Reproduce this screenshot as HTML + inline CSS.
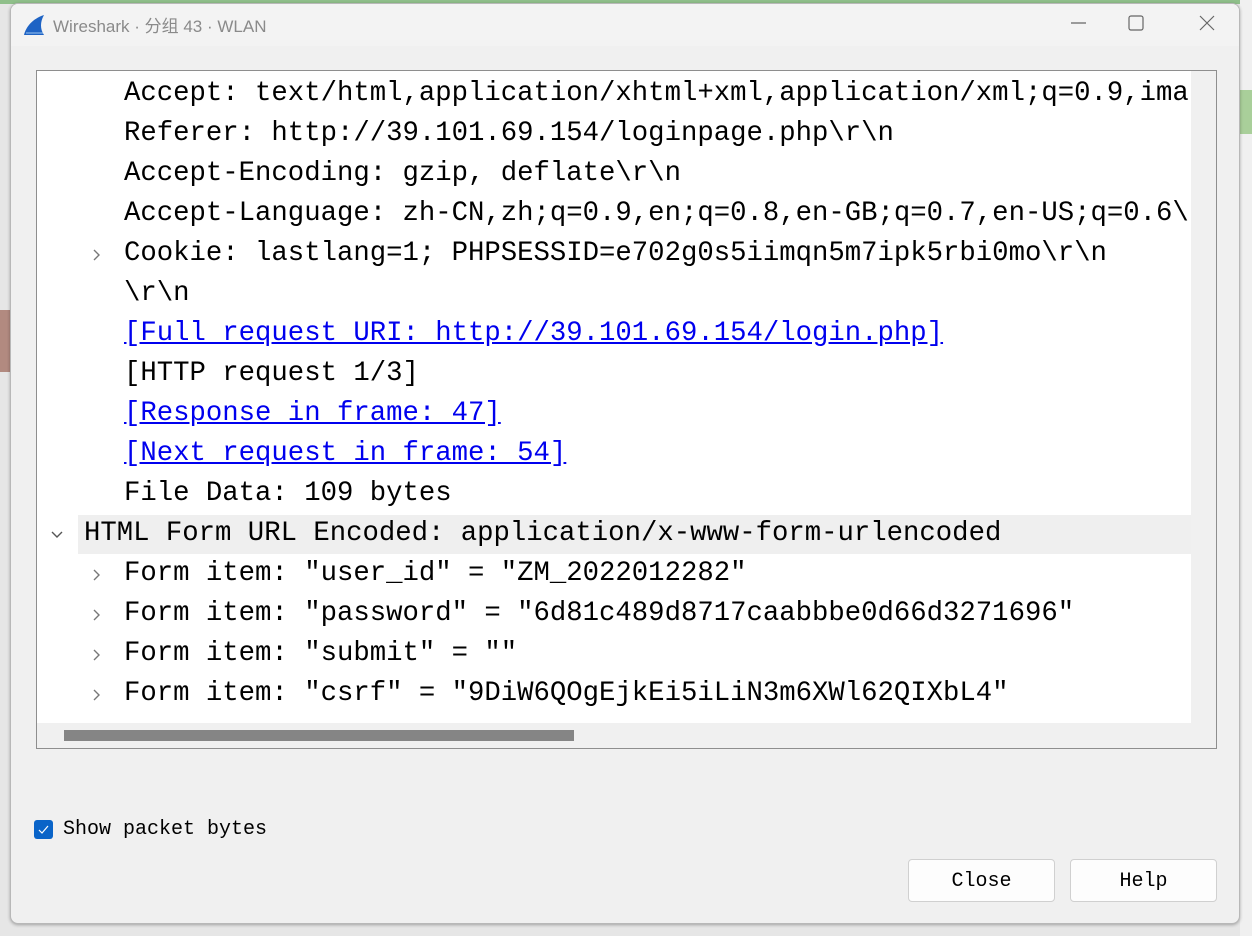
<!DOCTYPE html>
<html><head><meta charset="utf-8"><style>
html,body{margin:0;padding:0;width:1252px;height:936px;overflow:hidden;background:#e6e6e6;position:relative;font-family:"Liberation Sans","Noto Sans CJK SC",sans-serif}
.topstrip{position:absolute;left:0;top:0;width:1252px;height:4px;background:#8fbf8a}
.rightstrip{position:absolute;left:1240px;top:0;width:12px;height:936px;background:#f0f0f0}
.rg{position:absolute;left:1240px;top:90px;width:12px;height:44px;background:#a9cf9a}
.leftblock{position:absolute;left:0;top:310px;width:10px;height:62px;background:#b28a80}
.win{position:absolute;left:10px;top:3px;width:1230px;height:921px;background:#f0f0f0;border:1px solid #b8b8b8;border-radius:8px;box-sizing:border-box;overflow:hidden;box-shadow:0 1px 3px rgba(0,0,0,.3)}
.title{position:absolute;left:0;top:0;width:100%;height:42px;background:#f3f3f3}
.title span{position:absolute;left:42px;top:8px;font-size:17px;color:#8a8a8a}
.tree{position:absolute;left:25px;top:66px;width:1181px;height:679px;background:#fff;border:1px solid #8e8e8e;box-sizing:border-box;overflow:hidden}
.row{position:absolute;left:0;height:40px;line-height:40px;font-family:"Liberation Mono",monospace;font-size:27.3px;color:#000;white-space:nowrap}
.row a{color:#0000ee;text-decoration:underline}
.arr{position:absolute;width:12px;height:14px}
.vs{position:absolute;left:1154px;top:0;width:26px;height:652px;background:#f0f0f0}
.vt{position:absolute;left:1161px;top:307px;width:11px;height:318px;background:#858585}
.hs{position:absolute;left:0;top:652px;width:1180px;height:26px;background:#f0f0f0}
.ht{position:absolute;left:27px;top:7px;width:510px;height:11px;background:#858585}
.btn{position:absolute;top:855px;width:147px;height:43px;background:#fdfdfd;border:1px solid #d0d0d0;border-radius:4px;box-sizing:border-box;font-family:"Liberation Mono",monospace;font-size:20px;text-align:center;line-height:43px;color:#000}
</style></head><body>
<div class="topstrip"></div><div class="rightstrip"></div><div class="rg"></div><div class="leftblock"></div>
<div class="win">
 <div class="title">
  <svg style="position:absolute;left:11px;top:8px" width="26" height="26" viewBox="0 0 26 26"><path d="M2 23 C4 15 10 7 22 3 C18 10 18 17 22 23 Z" fill="#1e63c4"/><path d="M4 21 L21 21" stroke="#9cc4f0" stroke-width="1"/></svg>
  <span>Wireshark · 分组 43 · WLAN</span>
  <svg style="position:absolute;left:1050px;top:7px" width="180" height="24" viewBox="0 0 180 24"><path d="M10 12 H25" stroke="#666" stroke-width="1.2"/><rect x="68" y="5" width="14" height="14" rx="2" fill="none" stroke="#666" stroke-width="1.2"/><path d="M139 5 L153 19 M153 5 L139 19" stroke="#666" stroke-width="1.2"/></svg>
 </div>
 <div class="tree">
  <div class="row" style="top:3px;left:87px">Accept: text/html,application/xhtml+xml,application/xml;q=0.9,ima</div>
  <div class="row" style="top:43px;left:87px">Referer: http://39.101.69.154/loginpage.php\r\n</div>
  <div class="row" style="top:83px;left:87px">Accept-Encoding: gzip, deflate\r\n</div>
  <div class="row" style="top:123px;left:87px">Accept-Language: zh-CN,zh;q=0.9,en;q=0.8,en-GB;q=0.7,en-US;q=0.6\</div>
  <svg class="arr" style="left:54px;top:177px" viewBox="0 0 12 14"><path d="M3 2 L8 7 L3 12" stroke="#777" stroke-width="1.4" fill="none"/></svg>
  <div class="row" style="top:163px;left:87px">Cookie: lastlang=1; PHPSESSID=e702g0s5iimqn5m7ipk5rbi0mo\r\n</div>
  <div class="row" style="top:203px;left:87px">\r\n</div>
  <div class="row" style="top:243px;left:87px"><a>[Full request URI: http://39.101.69.154/login.php]</a></div>
  <div class="row" style="top:283px;left:87px">[HTTP request 1/3]</div>
  <div class="row" style="top:323px;left:87px"><a>[Response in frame: 47]</a></div>
  <div class="row" style="top:363px;left:87px"><a>[Next request in frame: 54]</a></div>
  <div class="row" style="top:403px;left:87px">File Data: 109 bytes</div>
  <div style="position:absolute;left:41px;top:444px;width:1113px;height:39px;background:#efefef"></div>
  <svg class="arr" style="left:13px;top:458px;width:14px;height:12px" viewBox="0 0 14 12"><path d="M2 3 L7 8 L12 3" stroke="#555" stroke-width="1.4" fill="none"/></svg>
  <div class="row" style="top:443px;left:47px">HTML Form URL Encoded: application/x-www-form-urlencoded</div>
  <svg class="arr" style="left:54px;top:497px" viewBox="0 0 12 14"><path d="M3 2 L8 7 L3 12" stroke="#777" stroke-width="1.4" fill="none"/></svg>
  <div class="row" style="top:483px;left:87px">Form item: "user_id" = "ZM_2022012282"</div>
  <svg class="arr" style="left:54px;top:537px" viewBox="0 0 12 14"><path d="M3 2 L8 7 L3 12" stroke="#777" stroke-width="1.4" fill="none"/></svg>
  <div class="row" style="top:523px;left:87px">Form item: "password" = "6d81c489d8717caabbbe0d66d3271696"</div>
  <svg class="arr" style="left:54px;top:577px" viewBox="0 0 12 14"><path d="M3 2 L8 7 L3 12" stroke="#777" stroke-width="1.4" fill="none"/></svg>
  <div class="row" style="top:563px;left:87px">Form item: "submit" = ""</div>
  <svg class="arr" style="left:54px;top:617px" viewBox="0 0 12 14"><path d="M3 2 L8 7 L3 12" stroke="#777" stroke-width="1.4" fill="none"/></svg>
  <div class="row" style="top:603px;left:87px">Form item: "csrf" = "9DiW6QOgEjkEi5iLiN3m6XWl62QIXbL4"</div>
  <div class="vs"><div class="vt"></div></div>
  <div class="hs"><div class="ht"></div></div>
 </div>
 <div style="position:absolute;left:23px;top:816px;width:19px;height:19px;background:#0a64c8;border-radius:3px"><svg width="19" height="19"><path d="M5 10 L8 13 L14 6" stroke="#fff" stroke-width="1.2" fill="none"/></svg></div>
 <div style="position:absolute;left:52px;top:814px;font-family:'Liberation Mono',monospace;font-size:20px;color:#000">Show packet bytes</div>
 <div class="btn" style="left:897px">Close</div>
 <div class="btn" style="left:1059px">Help</div>
</div>
</body></html>
